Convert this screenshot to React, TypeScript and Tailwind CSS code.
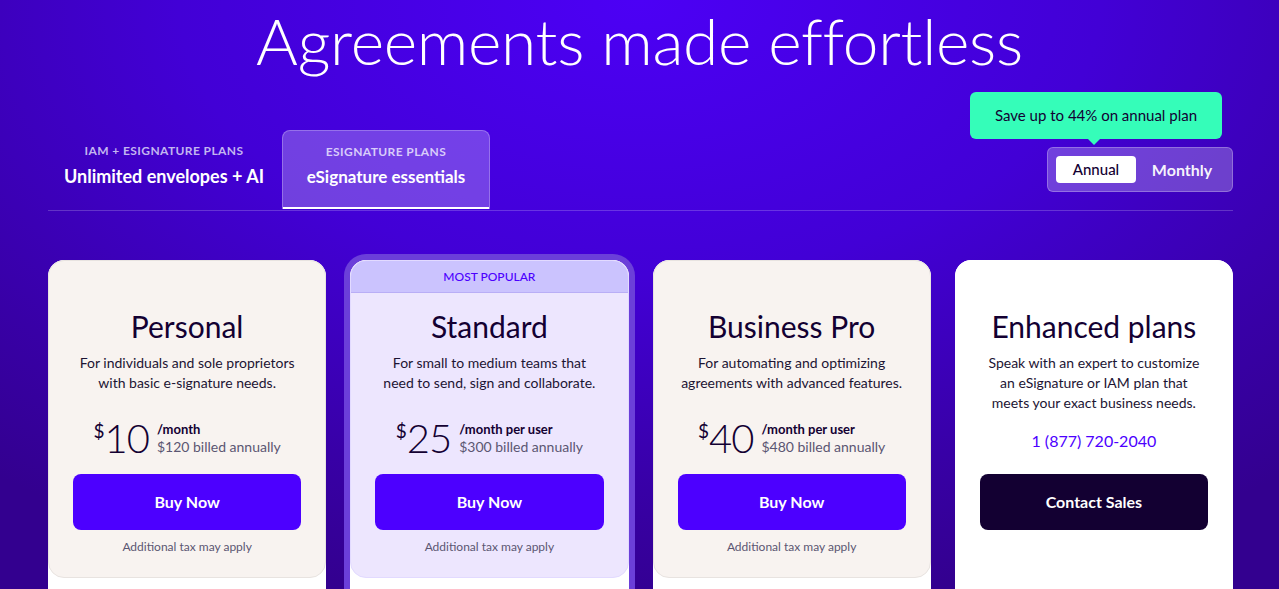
import React from "react";

type Plan = {
  name: string;
  desc: string[];
  price?: string;
  unit?: string;
  billed?: string;
  phone?: string;
  cta: string;
  popular?: boolean;
  enterprise?: boolean;
};

const plans: Plan[] = [
  {
    name: "Personal",
    desc: ["For individuals and sole proprietors", "with basic e-signature needs."],
    price: "10",
    unit: "/month",
    billed: "$120 billed annually",
    cta: "Buy Now",
  },
  {
    name: "Standard",
    desc: ["For small to medium teams that", "need to send, sign and collaborate."],
    price: "25",
    unit: "/month per user",
    billed: "$300 billed annually",
    cta: "Buy Now",
    popular: true,
  },
  {
    name: "Business Pro",
    desc: ["For automating and optimizing", "agreements with advanced features."],
    price: "40",
    unit: "/month per user",
    billed: "$480 billed annually",
    cta: "Buy Now",
  },
  {
    name: "Enhanced plans",
    desc: [
      "Speak with an expert to customize",
      "an eSignature or IAM plan that",
      "meets your exact business needs.",
    ],
    phone: "1 (877) 720-2040",
    cta: "Contact Sales",
    enterprise: true,
  },
];

function PlanCard({ plan }: { plan: Plan }) {
  const top = plan.enterprise
    ? "bg-white border-white"
    : plan.popular
    ? "bg-[#ede6fe] border-[#e2daff]"
    : "bg-[#f8f3f0] border-[#e8e3e0]";

  return (
    <div
      className={`rounded-2xl bg-white h-[420px] ${
        plan.popular ? "ring-[6px] ring-[#6b3fd9]" : ""
      }`}
    >
      <div className={`rounded-2xl border overflow-hidden text-center ${top}`}>
        {plan.popular && (
          <div className="h-[32px] flex items-center justify-center bg-[#cbc3fe] border-b border-[#b9aef6] text-[12px] font-medium text-[#4c00ff]">
            MOST POPULAR
          </div>
        )}
        <div className={`px-6 pb-[22px] ${plan.popular ? "pt-[15px]" : "pt-[47px]"}`}>
          <h2 className="text-[30px] leading-[36px] text-[#130032]">{plan.name}</h2>
          <div className="h-[121px] mt-[9px] flex flex-col items-center">
            <p className="text-[14px] leading-[20px] text-[#1c1433]">
              {plan.desc.map((l) => (
                <span key={l} className="block">
                  {l}
                </span>
              ))}
            </p>
            {plan.price && (
              <div className="mt-[26px] flex items-start">
                <div className="flex items-start text-[#130032]">
                  <span className="text-[19px] leading-[20px] mt-[2px]">$</span>
                  <span className="text-[40px] leading-[38px] font-light tracking-[-1px]">
                    {plan.price}
                  </span>
                </div>
                <div className="text-left pt-[2px] ml-[8px]">
                  <div className="text-[13px] leading-[16px] font-bold text-[#130032]">
                    {plan.unit}
                  </div>
                  <div className="text-[14px] leading-[20px] text-[#5b5672]">{plan.billed}</div>
                </div>
              </div>
            )}
            {plan.phone && (
              <div className="mt-[17px] text-[16px] leading-[22px] text-[#4c00ff]">
                {plan.phone}
              </div>
            )}
          </div>
          <button
            className={`w-full h-[56px] rounded-lg text-[16px] font-bold text-white ${
              plan.enterprise ? "bg-[#130032]" : "bg-[#4c00ff]"
            }`}
          >
            {plan.cta}
          </button>
          <div
            className={`mt-[9px] text-[12px] leading-[16px] text-[#5b5672] ${
              plan.enterprise ? "invisible" : ""
            }`}
          >
            Additional tax may apply
          </div>
        </div>
      </div>
    </div>
  );
}

export default function App() {
  return (
    <div className="min-h-screen w-full overflow-hidden bg-[radial-gradient(ellipse_80%_90%_at_50%_0%,#4c00f5_0%,#4200d6_45%,#3800a6_80%,#33008f_100%)] font-['Lato','Noto_Sans',sans-serif]">
      <h1 className="pt-[10px] text-center text-[64px] leading-[62px] font-light text-white tracking-[-0.3px]">
        Agreements made effortless
      </h1>

      <div className="ml-[48px] w-[1185px] mt-[57px]">
        <div className="flex items-end justify-between">
          <div className="flex items-end gap-[2px]">
            <div className="w-[232px] pt-[14px] pb-[21px] text-center">
              <div className="text-[12px] leading-[16px] font-bold tracking-[0.4px] text-[#c3b6f0]">
                IAM + ESIGNATURE PLANS
              </div>
              <div className="mt-[5px] text-[18px] leading-[24px] font-bold text-white">
                Unlimited envelopes + AI
              </div>
            </div>
            <div className="w-[208px] pt-[13px] pb-[20px] text-center rounded-t-lg bg-white/25 border border-b-0 border-white/25 shadow-[inset_0_-2px_0_#ffffff]">
              <div className="text-[12px] leading-[16px] font-bold tracking-[0.4px] text-[#d8ccfa]">
                ESIGNATURE PLANS
              </div>
              <div className="mt-[5px] text-[17px] leading-[24px] font-bold text-white">
                eSignature essentials
              </div>
            </div>
          </div>

          <div className="relative mb-[17px]">
            <div className="absolute bottom-[53px] right-[11px] w-[252px] h-[47px] rounded-md bg-[#35fdb9] flex items-center justify-center text-[15px] text-[#130032] whitespace-nowrap">
              Save up to 44% on annual plan
              <span className="absolute -bottom-[6px] left-[117px] w-0 h-0 border-l-[7px] border-r-[7px] border-t-[7px] border-l-transparent border-r-transparent border-t-[#35fdb9]" />
            </div>
            <div className="flex items-center w-[186px] h-[45px] pl-[8px] pr-[4px] rounded-md bg-white/25 border border-white/25">
              <button className="w-[80px] h-[27px] rounded bg-white text-[15px] font-medium text-[#130032]">
                Annual
              </button>
              <button className="flex-1 h-[27px] text-[16px] font-bold text-white/95">
                Monthly
              </button>
            </div>
          </div>
        </div>
        <div className="mt-[1px] h-px bg-white/20" />

        <div className="mt-[49px] grid grid-cols-4 gap-6">
          {plans.map((p) => (
            <PlanCard key={p.name} plan={p} />
          ))}
        </div>
      </div>
    </div>
  );
}
